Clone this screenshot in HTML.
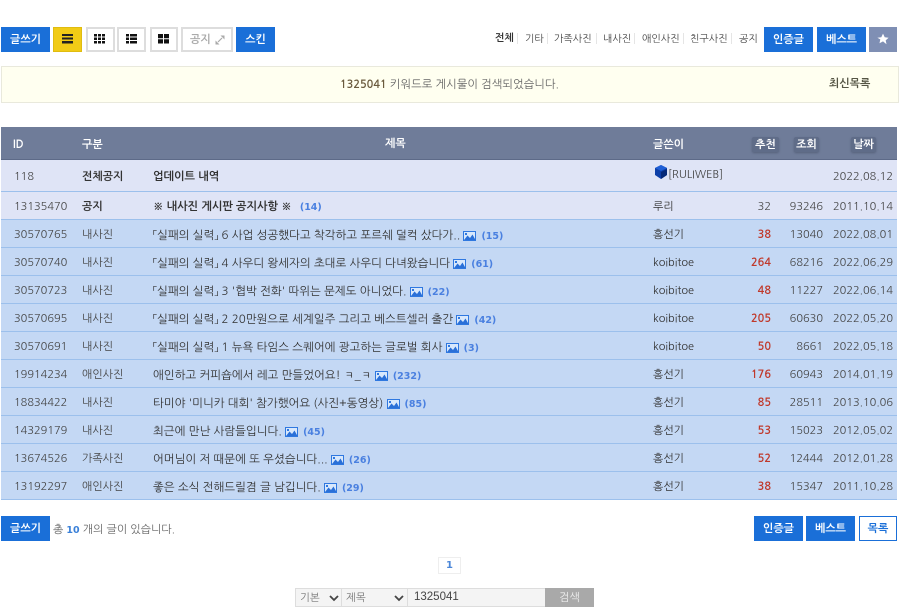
<!DOCTYPE html>
<html lang="ko"><head><meta charset="utf-8"><style>
html,body{margin:0;padding:0;background:#fff}
body{width:900px;height:611px;position:relative;overflow:hidden;font-family:"NanumGothic","Liberation Sans",sans-serif;font-size:11px;color:#444}
.a{position:absolute;white-space:nowrap}
.b{position:absolute;box-sizing:border-box;text-align:center;font-weight:bold;font-size:11px;height:25px;line-height:24px}
.blue{background:#1a6fd8;color:#fff;border:1px solid #1a6fd8}
.white{background:#fff;border:2px solid #ddd}
.row{position:absolute;left:1px;width:896px;border-bottom:1px solid #9cc0ec}
.c{position:absolute;white-space:nowrap;top:0;line-height:30px}
.id{left:13px;color:#444}
.cat{left:81px;color:#444}
.t{left:152px;color:#333;font-size:11.5px}
.w{left:652px;color:#333}
.r{width:40px;text-align:right;left:730px}
.v{width:50px;text-align:right;left:772px;color:#444}
.d{width:70px;text-align:right;left:822px;color:#444}
.red{color:#c0392b;font-weight:bold}
.n{color:#4a80e0;font-weight:bold;margin-left:5px;font-family:"DejaVu Sans",sans-serif;font-size:9.5px}
.im{display:inline-block;vertical-align:-2px;margin-left:0}
.tag{position:absolute;top:10px;height:15px;line-height:15px;background:#5f6c88;color:#fff;font-weight:bold;text-align:center;border-radius:2px;box-shadow:0 1px 2px #56617a}
.h{position:absolute;color:#fff;font-weight:bold;line-height:35px;top:0}
.m{position:absolute;top:33px;font-size:10px;color:#444;white-space:nowrap}
.sep{position:absolute;top:33px;width:1px;height:11px;background:#e5e5e5}
</style></head><body>

<div class="b blue" style="left:1px;top:27px;width:49px">글쓰기</div>
<div class="b" style="left:53px;top:27px;width:29px;background:#f1cb16;border:1px solid #e0bc10"></div>
<svg class="a" style="left:61px;top:34px" width="13" height="10"><path d="M1 0h11v2H1zM1 3.500h11v2H1zM1 7h11v2.500H1z" fill="#222"/></svg>
<div class="b white" style="left:86px;top:27px;width:29px"></div>
<svg class="a" style="left:94px;top:34px" width="12" height="10"><path d="M0 0h3v2.500H0zM4 0h3v2.500H4zM8 0h3v2.500H8zM0 3.500h3v2.500H0zM4 3.500h3v2.500H4zM8 3.500h3v2.500H8zM0 7h3v2.500H0zM4 7h3v2.500H4zM8 7h3v2.500H8z" fill="#111"/></svg>
<div class="b white" style="left:117px;top:27px;width:29px"></div>
<svg class="a" style="left:126px;top:34px" width="12" height="10"><path d="M0 0h3v2.500H0zM4 0h7v2.500H4zM0 3.500h3v2.500H0zM4 3.500h7v2.500H4zM0 7h3v2.500H0zM4 7h7v2.500H4z" fill="#111"/></svg>
<div class="b white" style="left:150px;top:27px;width:28px"></div>
<svg class="a" style="left:158px;top:34px" width="12" height="10"><path d="M0 0h5v4.300H0zM6 0h5v4.300H6zM0 5.200h5v4.300H0zM6 5.200h5v4.300H6z" fill="#111"/></svg>
<div class="b white" style="left:181px;top:27px;width:52px;color:#aaa;text-align:left;padding-left:7px;line-height:22px">공지</div>
<svg class="a" style="left:215px;top:35px" width="10" height="10" viewBox="0 0 10 10"><path d="M5.500 0.500h4v4zM0.500 5.500v4h4z" fill="#aaa"/><path d="M7 3L3 7" stroke="#aaa" stroke-width="1.200"/></svg>
<div class="b blue" style="left:236px;top:27px;width:39px">스킨</div>

<div class="m" style="left:495px;top:34px;font-weight:bold;color:#333">전체</div><div class="sep" style="left:517px"></div>
<div class="m" style="left:525px">기타</div><div class="sep" style="left:547px"></div>
<div class="m" style="left:554px">가족사진</div><div class="sep" style="left:596px"></div>
<div class="m" style="left:603px">내사진</div><div class="sep" style="left:634px"></div>
<div class="m" style="left:642px">애인사진</div><div class="sep" style="left:683px"></div>
<div class="m" style="left:690px">친구사진</div><div class="sep" style="left:731px"></div>
<div class="m" style="left:739px">공지</div>
<div class="b blue" style="left:764px;top:27px;width:49px">인증글</div>
<div class="b blue" style="left:817px;top:27px;width:49px">베스트</div>
<div class="b" style="left:869px;top:27px;width:28px;background:#7f8fb4"></div>
<svg class="a" style="left:877px;top:33px" width="12" height="12" viewBox="0 0 12 12"><path d="M6 .6l1.700 3.600 3.900.5-2.900 2.700.8 3.900L6 8.400 2.500 10.300l.8-3.900L.4 4.700l3.900-.5z" fill="#fff"/></svg>

<div class="a" style="left:1px;top:66px;width:898px;height:37px;box-sizing:border-box;background:#fffff0;border:1px solid #e9e9dc"></div>
<div class="a" style="left:340px;top:77px;color:#666;font-size:11.300px"><b style="color:#6b5b3e;font-size:11px">1325041</b> 키워드로 게시물이 검색되었습니다.</div>
<div class="a" style="left:829px;top:78px;font-weight:bold;color:#554">최신목록</div>

<div class="a" style="left:1px;top:127px;width:896px;height:33px;background:#6f7c99;border-bottom:1px solid #5d6a88;box-sizing:border-box">
<div class="h" style="left:12px">ID</div><div class="h" style="left:81px">구분</div><div class="h" style="left:384px;top:-1px">제목</div><div class="h" style="left:652px">글쓴이</div>
<div class="tag" style="left:751px;width:27px">추천</div><div class="tag" style="left:793px;width:25px">조회</div><div class="tag" style="left:850px;width:25px">날짜</div>
</div>

<div class="row" style="top:160px;height:31px;background:#dfe4f6"><div class="c id" style="line-height:34px">118</div><div class="c cat" style="line-height:34px;font-weight:bold;color:#333">전체공지</div><div class="c t" style="line-height:34px;font-weight:bold;font-size:11.200px">업데이트 내역</div>
<svg class="a" style="left:653px;top:5px" width="15" height="15" viewBox="0 0 15 15"><path d="M7 0l6 3v7l-6 4-6-4V3z" fill="#0d3fa8"/><path d="M7 7l6-3v6l-6 4z" fill="#062a78"/><path d="M1 3l6-3 6 3-6 3z" fill="#1f5fd6"/></svg>
<div class="c w" style="left:667px;top:1px;line-height:27px;color:#444">[RULIWEB]</div><div class="c d" style="line-height:34px">2022.08.12</div></div>

<div class="row" style="top:192px;height:27px;background:#dfe4f6"><div class="c id">13135470</div><div class="c cat" style="font-weight:bold;color:#333">공지</div><div class="c t" style="font-weight:bold;font-size:11.200px">※ 내사진 게시판 공지사항 ※ <span class="n">(14)</span></div><div class="c w">루리</div><div class="c r" style="color:#444">32</div><div class="c v">93246</div><div class="c d">2011.10.14</div></div>

<svg width="0" height="0" style="position:absolute"><symbol id="i" viewBox="0 0 13 10"><rect x=".5" y=".5" width="12" height="9" fill="#d8e8fc" stroke="#2f78e0"/><path d="M1 9l3.500-4.500 2.500 2.500 2.500-3.500 3 5.500z" fill="#2a70d8"/><rect x="2" y="2" width="2" height="2" fill="#2f78e0"/></symbol></svg>

<div class="row" style="top:220px;height:27px;background:#c4d8f4"><div class="c id">30570765</div><div class="c cat">내사진</div><div class="c t">「실패의 실력」 6 사업 성공했다고 착각하고 포르쉐 덜컥 샀다가.. <svg class="im" width="13" height="10"><use href="#i"/></svg><span class="n">(15)</span></div><div class="c w">홍선기</div><div class="c r red">38</div><div class="c v">13040</div><div class="c d">2022.08.01</div></div>

<div class="row" style="top:248px;height:27px;background:#c4d8f4"><div class="c id">30570740</div><div class="c cat">내사진</div><div class="c t">「실패의 실력」 4 사우디 왕세자의 초대로 사우디 다녀왔습니다 <svg class="im" width="13" height="10"><use href="#i"/></svg><span class="n">(61)</span></div><div class="c w">koibitoe</div><div class="c r red">264</div><div class="c v">68216</div><div class="c d">2022.06.29</div></div>

<div class="row" style="top:276px;height:27px;background:#c4d8f4"><div class="c id">30570723</div><div class="c cat">내사진</div><div class="c t">「실패의 실력」 3 '협박 전화' 따위는 문제도 아니었다. <svg class="im" width="13" height="10"><use href="#i"/></svg><span class="n">(22)</span></div><div class="c w">koibitoe</div><div class="c r red">48</div><div class="c v">11227</div><div class="c d">2022.06.14</div></div>

<div class="row" style="top:304px;height:27px;background:#c4d8f4"><div class="c id">30570695</div><div class="c cat">내사진</div><div class="c t">「실패의 실력」 2 20만원으로 세계일주 그리고 베스트셀러 출간 <svg class="im" width="13" height="10"><use href="#i"/></svg><span class="n">(42)</span></div><div class="c w">koibitoe</div><div class="c r red">205</div><div class="c v">60630</div><div class="c d">2022.05.20</div></div>

<div class="row" style="top:332px;height:27px;background:#c4d8f4"><div class="c id">30570691</div><div class="c cat">내사진</div><div class="c t">「실패의 실력」 1 뉴욕 타임스 스퀘어에 광고하는 글로벌 회사 <svg class="im" width="13" height="10"><use href="#i"/></svg><span class="n">(3)</span></div><div class="c w">koibitoe</div><div class="c r red">50</div><div class="c v">8661</div><div class="c d">2022.05.18</div></div>

<div class="row" style="top:360px;height:27px;background:#c4d8f4"><div class="c id">19914234</div><div class="c cat">애인사진</div><div class="c t">애인하고 커피숍에서 레고 만들었어요! ㅋ_ㅋ <svg class="im" width="13" height="10"><use href="#i"/></svg><span class="n">(232)</span></div><div class="c w">홍선기</div><div class="c r red">176</div><div class="c v">60943</div><div class="c d">2014.01.19</div></div>

<div class="row" style="top:388px;height:27px;background:#c4d8f4"><div class="c id">18834422</div><div class="c cat">내사진</div><div class="c t">타미야 '미니카 대회' 참가했어요 (사진+동영상) <svg class="im" width="13" height="10"><use href="#i"/></svg><span class="n">(85)</span></div><div class="c w">홍선기</div><div class="c r red">85</div><div class="c v">28511</div><div class="c d">2013.10.06</div></div>

<div class="row" style="top:416px;height:27px;background:#c4d8f4"><div class="c id">14329179</div><div class="c cat">내사진</div><div class="c t">최근에 만난 사람들입니다. <svg class="im" width="13" height="10"><use href="#i"/></svg><span class="n">(45)</span></div><div class="c w">홍선기</div><div class="c r red">53</div><div class="c v">15023</div><div class="c d">2012.05.02</div></div>

<div class="row" style="top:444px;height:27px;background:#c4d8f4"><div class="c id">13674526</div><div class="c cat">가족사진</div><div class="c t">어머님이 저 때문에 또 우셨습니다... <svg class="im" width="13" height="10"><use href="#i"/></svg><span class="n">(26)</span></div><div class="c w">홍선기</div><div class="c r red">52</div><div class="c v">12444</div><div class="c d">2012.01.28</div></div>

<div class="row" style="top:472px;height:27px;background:#c4d8f4"><div class="c id">13192297</div><div class="c cat">애인사진</div><div class="c t">좋은 소식 전해드릴겸 글 남깁니다. <svg class="im" width="13" height="10"><use href="#i"/></svg><span class="n">(29)</span></div><div class="c w">홍선기</div><div class="c r red">38</div><div class="c v">15347</div><div class="c d">2011.10.28</div></div>

<div class="b blue" style="left:1px;top:516px;width:49px">글쓰기</div>
<div class="a" style="left:53px;top:523px;color:#666">총 <b style="color:#3a80d8;font-family:'DejaVu Sans',sans-serif;font-size:9.500px">10</b> 개의 글이 있습니다.</div>
<div class="b blue" style="left:754px;top:516px;width:49px">인증글</div>
<div class="b blue" style="left:806px;top:516px;width:49px">베스트</div>
<div class="b" style="left:859px;top:516px;width:38px;background:#fff;border:1px solid #1a6fd8;color:#1a6fd8">목록</div>

<div class="a" style="left:438px;top:557px;width:23px;height:17px;box-sizing:border-box;border:1px solid #eee;text-align:center;line-height:15px;font-weight:bold;color:#4a86d8;font-family:'DejaVu Sans',sans-serif;font-size:10px">1</div>

<div class="a" style="left:295px;top:588px;width:299px;height:19px;box-sizing:border-box;border:1px solid #ddd;background:#f4f4f4"></div>
<div class="a" style="left:300px;top:591px;color:#777;font-size:10.500px">기본</div>
<svg class="a" style="left:329px;top:595px" width="10" height="7"><path d="M1 1l4 4 4-4" fill="none" stroke="#444" stroke-width="1.800"/></svg>
<div class="a" style="left:341px;top:588px;width:1px;height:19px;background:#ddd"></div>
<div class="a" style="left:346px;top:591px;color:#777;font-size:10.500px">제목</div>
<svg class="a" style="left:394px;top:595px" width="10" height="7"><path d="M1 1l4 4 4-4" fill="none" stroke="#444" stroke-width="1.800"/></svg>
<div class="a" style="left:407px;top:588px;width:1px;height:19px;background:#ddd"></div>
<div class="a" style="left:414px;top:591px;color:#444;font-size:11.500px;font-family:'Liberation Sans',sans-serif">1325041</div>
<div class="a" style="left:545px;top:588px;width:49px;height:19px;background:#a9a9a9;color:#eee;text-align:center;line-height:19px">검색</div>
</body></html>
